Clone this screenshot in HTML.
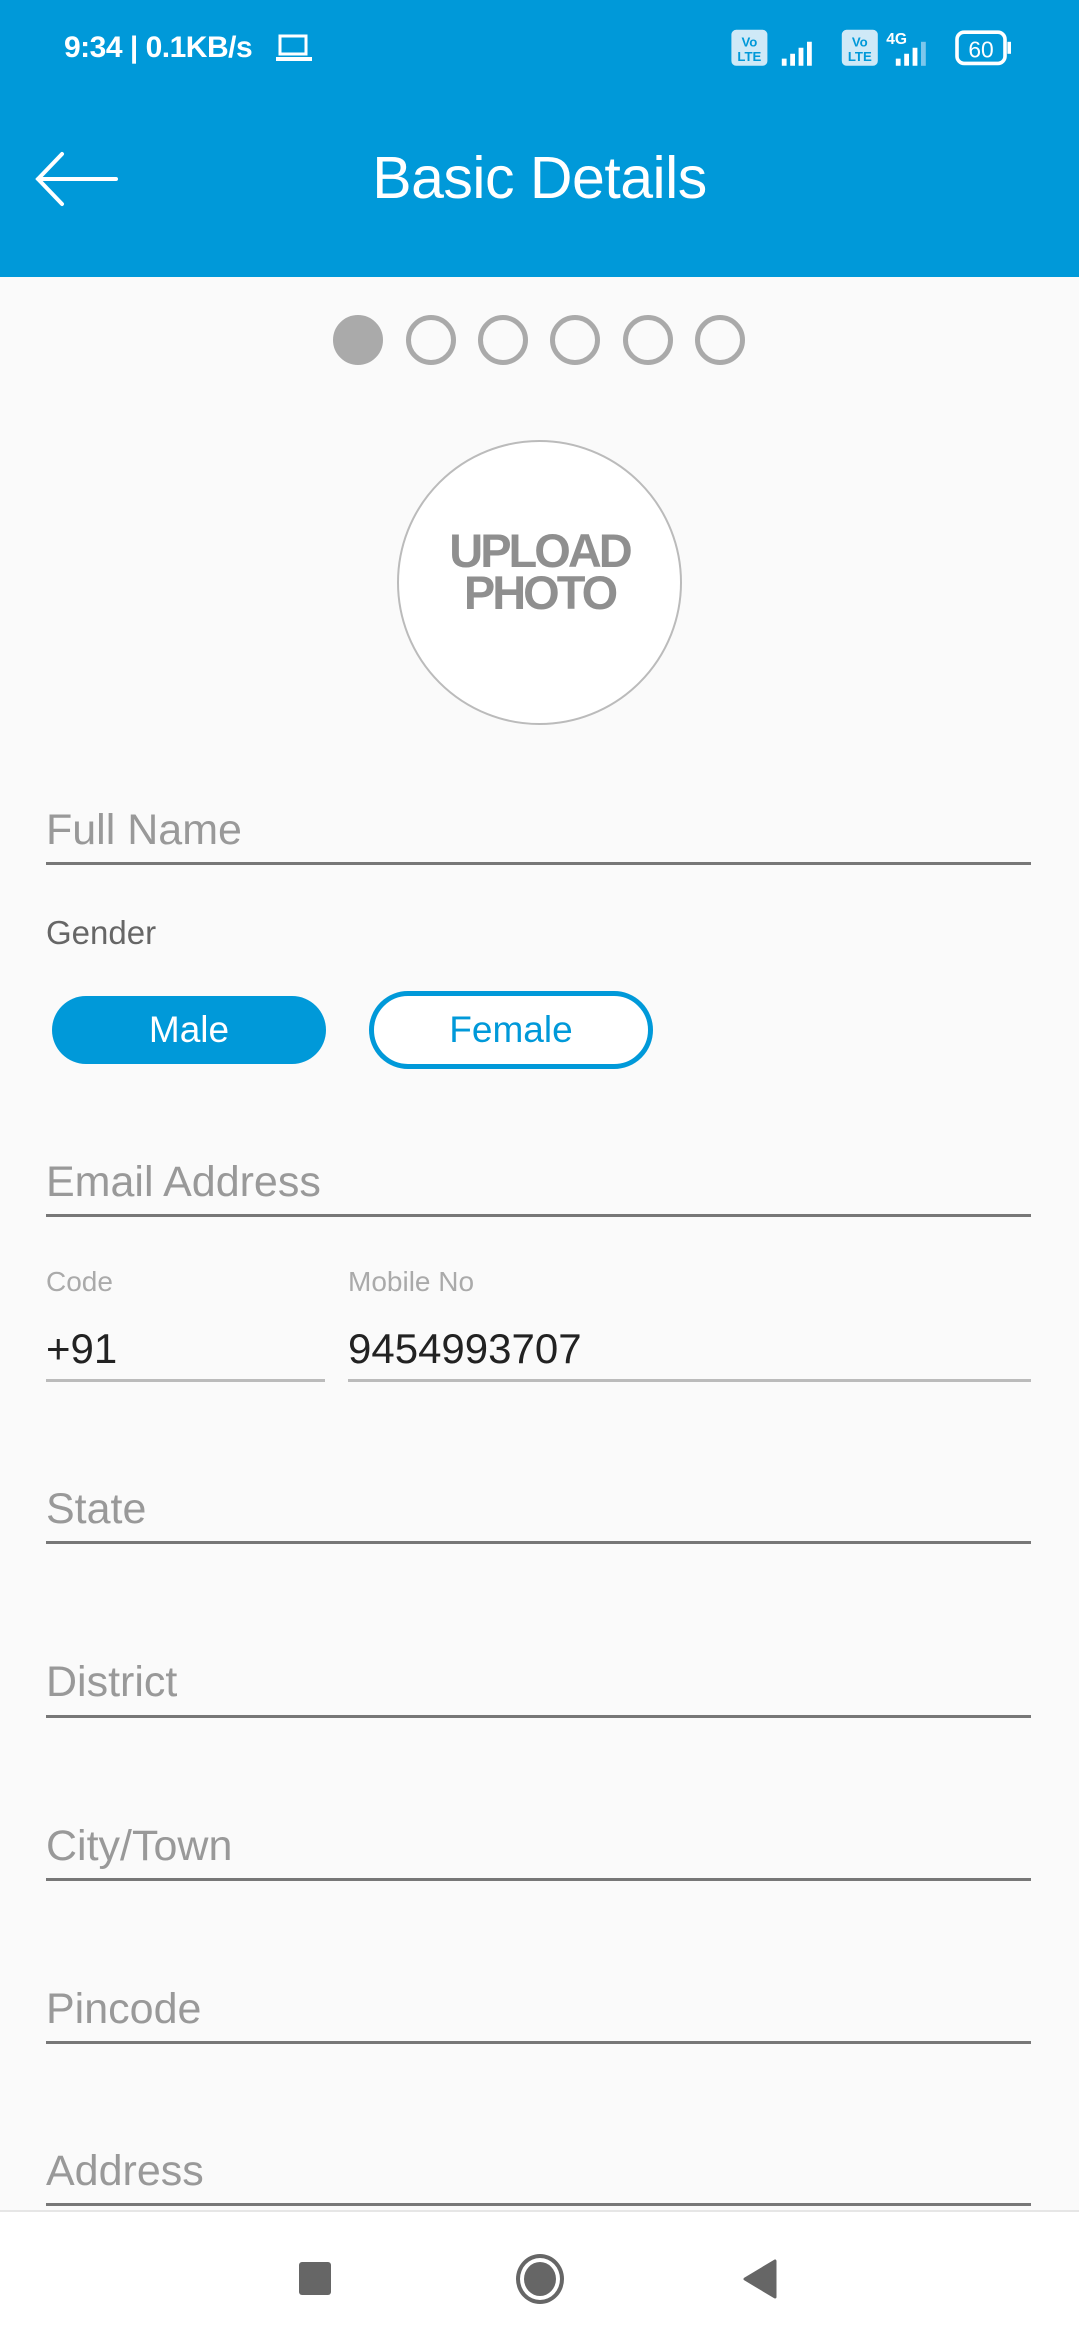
<!DOCTYPE html>
<html><head><meta charset="utf-8"><style>
*{margin:0;padding:0;box-sizing:border-box}
body{width:1079px;height:2340px;background:#fafafa;font-family:"Liberation Sans",sans-serif;position:relative;overflow:hidden}
.abs{position:absolute}
.hdr{left:0;top:0;width:1079px;height:277px;background:#0099d9}
.ph{left:46px;font-size:43px;color:#999;line-height:1;font-weight:300}
.ln{left:46px;width:985px;height:3px;background:#777}
.dot{width:50px;height:50px;border-radius:50%;border:5px solid #aaa;top:315px}
</style></head><body>
<div class="abs hdr"></div>
<div class="abs" style="left:64px;top:31px;color:#fff;font-size:30px;font-weight:bold;letter-spacing:-0.5px">9:34 | 0.1KB/s</div>
<svg class="abs" style="left:276px;top:34px" width="36" height="30"><rect x="4" y="2" width="26" height="18" fill="none" stroke="#fff" stroke-width="3"/><rect x="0" y="23" width="36" height="4" fill="#fff"/></svg>
<svg class="abs" style="left:728px;top:25px" width="290" height="48" viewBox="0 0 240 40">
<rect x="2" y="4" width="30" height="30" rx="4" fill="#cfe9f7"/><text x="17" y="18" font-size="11" fill="#0099d9" text-anchor="middle" font-family="Liberation Sans" font-weight="bold">Vo</text><text x="17" y="30" font-size="11" fill="#0099d9" text-anchor="middle" font-family="Liberation Sans" font-weight="bold">LTE</text>
<path d="M44 34v-6h4v6zM51 34v-10h4v10zM58 34v-15h4v15zM65 34v-20h4v20z" fill="#fff"/>
<rect x="94" y="4" width="30" height="30" rx="4" fill="#cfe9f7"/><text x="109" y="18" font-size="11" fill="#0099d9" text-anchor="middle" font-family="Liberation Sans" font-weight="bold">Vo</text><text x="109" y="30" font-size="11" fill="#0099d9" text-anchor="middle" font-family="Liberation Sans" font-weight="bold">LTE</text>
<text x="131" y="16" font-size="13" fill="#fff" font-family="Liberation Sans" font-weight="bold">4G</text>
<path d="M139 34v-6h4v6zM146 34v-10h4v10zM153 34v-15h4v15z" fill="#fff"/><path d="M160 34v-20h4v20z" fill="#7cc7ec"/>
<rect x="190" y="6" width="40" height="26" rx="6" fill="none" stroke="#fff" stroke-width="3"/><rect x="232" y="14" width="3" height="10" fill="#fff"/><text x="210" y="27" font-size="19" fill="#fff" text-anchor="middle" font-family="Liberation Sans">60</text>
</svg>
<svg class="abs" style="left:34px;top:150px" width="86" height="60"><path d="M82 29H4M28 4L4 29L28 54" fill="none" stroke="#fff" stroke-width="4" stroke-linecap="round"/></svg>
<div class="abs" style="left:0;width:1079px;text-align:center;top:144px;color:#fff;font-size:59px;font-weight:500;letter-spacing:-0.5px">Basic Details</div>

<div class="abs dot" style="left:333px;background:#aaa"></div>
<div class="abs dot" style="left:406px"></div>
<div class="abs dot" style="left:478px"></div>
<div class="abs dot" style="left:550px"></div>
<div class="abs dot" style="left:623px"></div>
<div class="abs dot" style="left:695px"></div>

<div class="abs" style="left:397px;top:440px;width:285px;height:285px;border-radius:50%;background:#fff;border:2px solid #bbb"></div>
<div class="abs" style="left:397px;width:285px;text-align:center;top:530px;font-size:47px;font-weight:bold;color:#8f8f8f;line-height:42px;letter-spacing:-3px">UPLOAD<br>PHOTO</div>

<div class="abs ph" style="top:809px">Full Name</div>
<div class="abs ln" style="top:862px"></div>
<div class="abs" style="left:46px;top:914px;font-size:33px;color:#666">Gender</div>
<div class="abs" style="left:52px;top:996px;width:274px;height:68px;border-radius:34px;background:#0099d9;color:#fff;font-size:37px;text-align:center;line-height:68px">Male</div>
<div class="abs" style="left:369px;top:991px;width:284px;height:78px;border-radius:39px;border:5px solid #0099d9;background:#fff;color:#0099d9;font-size:37px;text-align:center;line-height:68px">Female</div>
<div class="abs ph" style="top:1161px">Email Address</div>
<div class="abs ln" style="top:1214px"></div>
<div class="abs" style="left:46px;top:1266px;font-size:28px;color:#aaa;font-weight:300">Code</div>
<div class="abs" style="left:348px;top:1266px;font-size:28px;color:#aaa;font-weight:300">Mobile No</div>
<div class="abs" style="left:46px;top:1325px;font-size:42px;color:#222">+91</div>
<div class="abs" style="left:348px;top:1325px;font-size:42px;color:#222">9454993707</div>
<div class="abs" style="left:46px;top:1379px;width:279px;height:3px;background:#bbb"></div>
<div class="abs" style="left:348px;top:1379px;width:683px;height:3px;background:#bbb"></div>
<div class="abs ph" style="top:1488px">State</div>
<div class="abs ln" style="top:1541px"></div>
<div class="abs ph" style="top:1661px">District</div>
<div class="abs ln" style="top:1715px"></div>
<div class="abs ph" style="top:1825px">City/Town</div>
<div class="abs ln" style="top:1878px"></div>
<div class="abs ph" style="top:1988px">Pincode</div>
<div class="abs ln" style="top:2041px"></div>
<div class="abs ph" style="top:2150px">Address</div>
<div class="abs ln" style="top:2203px"></div>

<div class="abs" style="left:0;top:2210px;width:1079px;height:130px;background:#fff;border-top:2px solid #e6e6e6"></div>
<div class="abs" style="left:299px;top:2262px;width:32px;height:33px;border-radius:3px;background:#666"></div>
<div class="abs" style="left:516px;top:2254px;width:48px;height:50px;border-radius:50%;border:4px solid #666;background:#fff"></div>
<div class="abs" style="left:524px;top:2262px;width:32px;height:34px;border-radius:50%;background:#666"></div>
<svg class="abs" style="left:742px;top:2258px" width="36" height="42"><path d="M33 3V39L3 21Z" fill="#666" stroke="#666" stroke-width="3" stroke-linejoin="round"/></svg>
</body></html>
